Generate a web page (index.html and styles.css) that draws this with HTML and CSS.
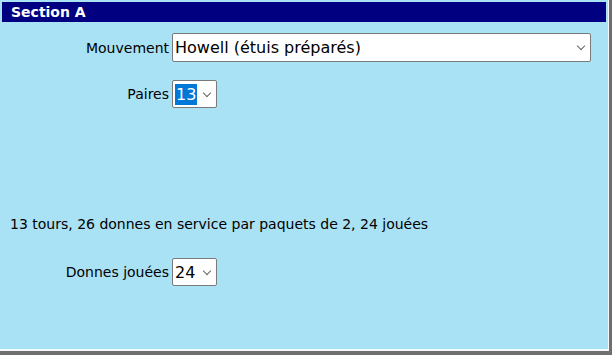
FILE: index.html
```html
<!DOCTYPE html>
<html lang="fr">
<head>
<meta charset="utf-8">
<title>Section A</title>
<link rel="stylesheet" href="styles.css">
</head>
<body>
<div class="frame">
    <div class="panel">
        <div class="title">Section A</div>
        <div class="row row-mouv">
            <label class="lbl">Mouvement</label>
            <div class="sel sel-wide">Howell (étuis préparés)<span class="chev"></span></div>
        </div>
        <div class="row row-paires">
            <label class="lbl">Paires</label>
            <div class="sel sel-small"><span class="hl">13</span><span class="chev"></span></div>
        </div>
        <p class="info">13 tours, 26 donnes en service par paquets de 2, 24 jouées</p>
        <div class="row row-donnes">
            <label class="lbl">Donnes jouées</label>
            <div class="sel sel-small">24<span class="chev"></span></div>
        </div>
    </div>
</div>
</body>
</html>
```

FILE: styles.css
```css
*{margin:0;padding:0;box-sizing:border-box}
body{width:612px;height:355px;overflow:hidden;font-family:"DejaVu Sans",Verdana,sans-serif;font-size:14px;color:#000;background:#fff}
.frame{width:612px;height:355px;border-right:3px solid #6f6f6f;border-bottom:4px solid #6f6f6f}
.panel{height:100%;background:#a9e1f5;border-right:1px solid #f2f8fb;border-bottom:2px solid #f2f8fb;padding:2px 2px 0 2px}
.title{height:20px;line-height:20px;background:#000080;color:#fff;font-weight:bold;padding-left:9px;font-size:14px}
.row{display:flex;align-items:center}
.lbl{width:170px;text-align:right;padding-right:3px}
.row-mouv{margin-top:11px}
.row-paires{margin-top:18px}
.row-donnes{margin-top:26px}
.sel{position:relative;height:29px;line-height:27px;background:#fff;border:1px solid #7a7a7a;border-radius:2px;padding-left:2px;font-size:16px}
.sel-wide{width:419px}
.sel-small{width:45px;height:28px}
.hl{background:#0078d7;color:#fff;display:inline-block;line-height:21px;padding:0 1px}
.chev{position:absolute;right:6px;top:9px;width:6px;height:6px;border-right:1px solid #666;border-bottom:1px solid #666;transform:rotate(45deg)}
.info{margin-top:108px;padding-left:8px}
```
